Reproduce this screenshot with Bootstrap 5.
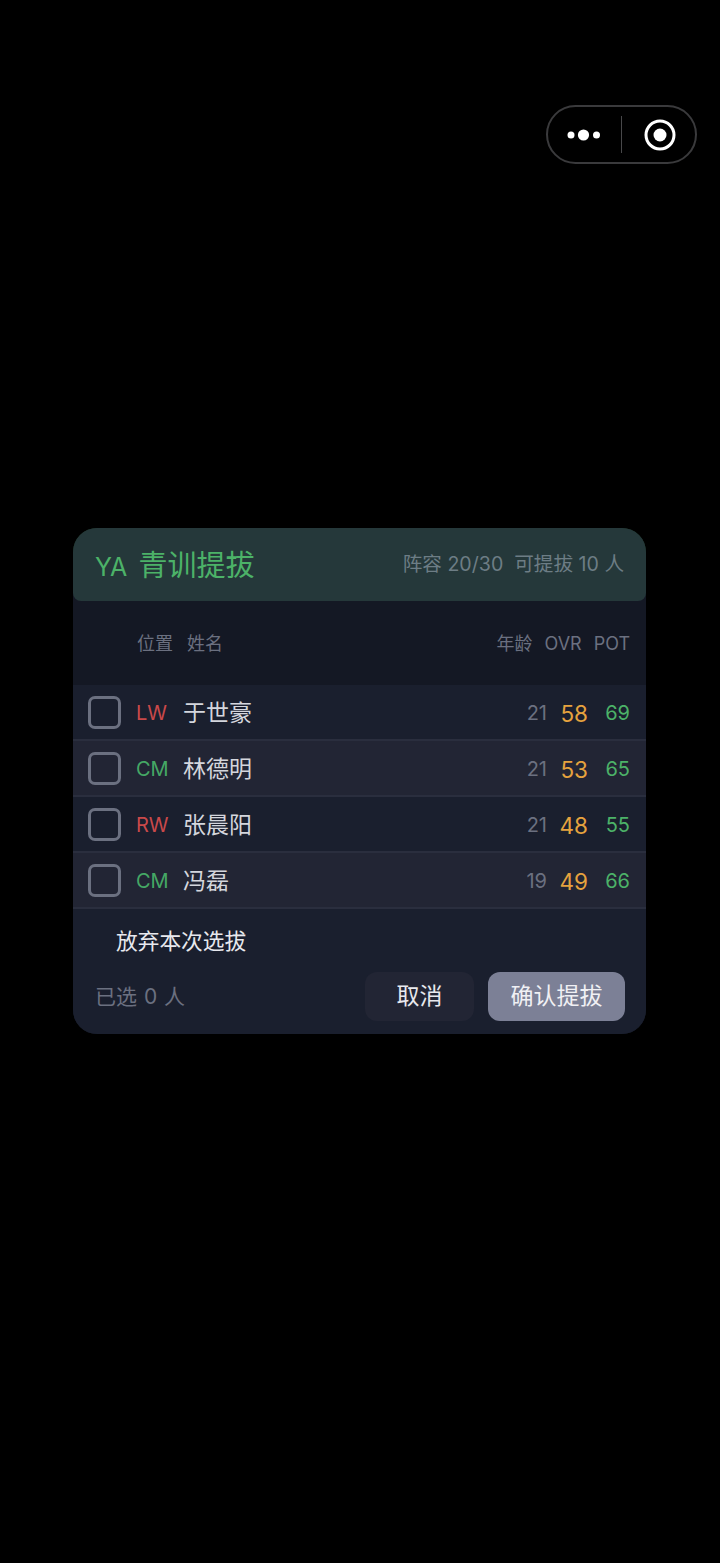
<!DOCTYPE html>
<html lang="zh-CN">
<head>
  <meta charset="UTF-8">
  <meta name="viewport" content="width=device-width, initial-scale=1.0">
  <title>青训提拔</title>
  <link rel="stylesheet" href="https://cdn.jsdelivr.net/npm/bootstrap@5.3.0/dist/css/bootstrap.min.css">
  <style>
    body { background-color: #000; font-family: Inter, "Noto Sans CJK SC", sans-serif; width: 720px; height: 1563px; overflow: hidden; }
    .screen { padding-top: 105px; }
    .capsule-wrap { padding-right: 23px; height: 423px; }
    .capsule { width: 151px; height: 59px; border: 2px solid #3a3a3c; border-radius: 30px; }
    .capsule-half { width: 73px; }
    .capsule-half.ring-part { padding-left: 2px; }
    .capsule-line { width: 2px; height: 37px; background: #48484a; }
    .dialog-box { width: 573px; height: 506px; margin-left: 73px; background: linear-gradient(#1a3320 0 30px, #141824 30px); border-radius: 24px; overflow: hidden; }
    .dialog-head { height: 73px; background: #25383a; border-radius: 20px 20px 8px 8px; padding: 0 22px; }
    .dialog-title { font-size: 29px; color: #4cb268; line-height: 1; padding-top: 1px; }
    .dialog-title span { font-size: 25px; margin-right: 11px; }
    .dialog-meta { font-size: 19.6px; color: #6d7d85; }
    .list-head { height: 84px; background: #141824; font-size: 18px; color: #6b7080; padding: 0 16px 0 64px; }
    .head-pos { width: 50px; }
    .head-age { margin-right: 12px; }
    .head-ovr { margin-right: 12px; }
    .player-row { height: 56px; padding: 1px 16px 0 15px; border-bottom: 2px solid #2a2e3e; background: #1a1f2e; }
    .player-row.alt { background: #222534; }
    .tick-box { width: 33px; height: 33px; border: 3px solid #6b7080; border-radius: 7px; margin-right: 15px; }
    .pos-cell { width: 47px; font-size: 20px; padding-top: 1px; }
    .pos-red { color: #c9494a; }
    .pos-green { color: #45a865; }
    .name-cell { font-size: 23px; color: #d4d6dd; padding-top: 2px; }
    .age-cell { width: 40px; font-size: 20px; color: #6b7080; text-align: right; padding-top: 1px; }
    .ovr-cell { width: 41px; font-size: 22.5px; color: #e6a33e; text-align: right; padding-top: 2px; }
    .pot-cell { width: 42px; font-size: 20px; color: #4cb268; text-align: right; padding-top: 1px; }
    .dialog-foot { background: #1a1f2e; height: 125px; }
    .skip-line { font-size: 21.7px; color: #e8e9ee; padding: 18px 0 0 43px; line-height: 29px; }
    .foot-line { padding: 16px 21px 0 22px; }
    .picked-text { font-size: 21px; color: #6b7080; word-spacing: 1px; }
    .btn-cancel { width: 109px; height: 49px; background: #222534; color: #e8e9ee; font-size: 23px; border: 0; border-radius: 12px; padding: 0; }
    .btn-ok { width: 137px; height: 49px; background: #7c8096; color: #f0f0f4; font-size: 23px; border: 0; border-radius: 12px; padding: 0; margin-left: 14px; }
    .btn-cancel:hover { background: #222534; color: #e8e9ee; }
    .btn-ok:hover { background: #7c8096; color: #f0f0f4; }
  </style>
</head>
<body>
  <div class="screen">
    <div class="capsule-wrap d-flex justify-content-end">
      <div class="capsule d-flex align-items-center">
        <div class="capsule-half d-flex justify-content-center">
          <svg width="34" height="14" viewBox="0 0 34 14"><circle cx="4" cy="7" r="3.5" fill="#fff"/><circle cx="16.5" cy="7" r="5.6" fill="#fff"/><circle cx="29.5" cy="7" r="3.5" fill="#fff"/></svg>
        </div>
        <div class="capsule-line"></div>
        <div class="capsule-half ring-part d-flex justify-content-center">
          <svg width="32" height="32" viewBox="0 0 32 32"><circle cx="16" cy="16" r="14" fill="none" stroke="#fff" stroke-width="3"/><circle cx="16" cy="16" r="6.5" fill="#fff"/></svg>
        </div>
      </div>
    </div>

    <div class="dialog-box">
      <div class="dialog-head d-flex align-items-center justify-content-between">
        <div class="dialog-title"><span>YA</span>青训提拔</div>
        <div class="dialog-meta">阵容 20/30 &nbsp;可提拔 10 人</div>
      </div>

      <div class="list-head d-flex align-items-center">
        <div class="head-pos">位置</div>
        <div>姓名</div>
        <div class="ms-auto head-age">年龄</div>
        <div class="head-ovr">OVR</div>
        <div>POT</div>
      </div>

      <div class="player-row d-flex align-items-center">
        <div class="tick-box"></div>
        <div class="pos-cell pos-red">LW</div>
        <div class="name-cell">于世豪</div>
        <div class="ms-auto age-cell">21</div>
        <div class="ovr-cell">58</div>
        <div class="pot-cell">69</div>
      </div>
      <div class="player-row alt d-flex align-items-center">
        <div class="tick-box"></div>
        <div class="pos-cell pos-green">CM</div>
        <div class="name-cell">林德明</div>
        <div class="ms-auto age-cell">21</div>
        <div class="ovr-cell">53</div>
        <div class="pot-cell">65</div>
      </div>
      <div class="player-row d-flex align-items-center">
        <div class="tick-box"></div>
        <div class="pos-cell pos-red">RW</div>
        <div class="name-cell">张晨阳</div>
        <div class="ms-auto age-cell">21</div>
        <div class="ovr-cell">48</div>
        <div class="pot-cell">55</div>
      </div>
      <div class="player-row alt d-flex align-items-center">
        <div class="tick-box"></div>
        <div class="pos-cell pos-green">CM</div>
        <div class="name-cell">冯磊</div>
        <div class="ms-auto age-cell">19</div>
        <div class="ovr-cell">49</div>
        <div class="pot-cell">66</div>
      </div>

      <div class="dialog-foot">
        <div class="skip-line">放弃本次选拔</div>
        <div class="foot-line d-flex align-items-center">
          <div class="picked-text">已选 0 人</div>
          <button type="button" class="btn btn-cancel ms-auto">取消</button>
          <button type="button" class="btn btn-ok">确认提拔</button>
        </div>
      </div>
    </div>
  </div>
</body>
</html>
